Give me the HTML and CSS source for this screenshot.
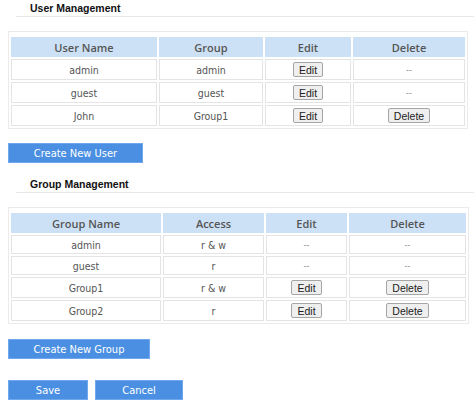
FILE: index.html
```html
<!DOCTYPE html>
<html>
<head>
<meta charset="utf-8">
<link rel="stylesheet" href="styles.css">
</head>
<body>
<div class="page">
  <div class="title">User Management</div>
  <div class="twrap">
    <table class="grid users">
      <colgroup><col class="u1"><col class="u2"><col class="u3"><col class="u4"></colgroup>
      <tr class="head"><th>User Name</th><th>Group</th><th>Edit</th><th>Delete</th></tr>
      <tr class="brow"><td>admin</td><td>admin</td><td><button class="sm">Edit</button></td><td class="dash">--</td></tr>
      <tr class="brow"><td>guest</td><td>guest</td><td><button class="sm">Edit</button></td><td class="dash">--</td></tr>
      <tr class="brow"><td>John</td><td>Group1</td><td><button class="sm">Edit</button></td><td><button class="sm">Delete</button></td></tr>
    </table>
  </div>
  <button class="blue create-user">Create New User</button>

  <div class="title t2">Group Management</div>
  <div class="twrap">
    <table class="grid groups">
      <colgroup><col class="g1"><col class="g2"><col class="g3"><col class="g4"></colgroup>
      <tr class="head"><th>Group Name</th><th>Access</th><th>Edit</th><th>Delete</th></tr>
      <tr class="trow"><td>admin</td><td>r &amp; w</td><td class="dash">--</td><td class="dash">--</td></tr>
      <tr class="trow"><td>guest</td><td>r</td><td class="dash">--</td><td class="dash">--</td></tr>
      <tr class="brow"><td>Group1</td><td>r &amp; w</td><td><button class="sm">Edit</button></td><td><button class="sm">Delete</button></td></tr>
      <tr class="brow"><td>Group2</td><td>r</td><td><button class="sm">Edit</button></td><td><button class="sm">Delete</button></td></tr>
    </table>
  </div>
  <button class="blue create-group">Create New Group</button>

  <div class="actions">
    <button class="blue save">Save</button>
    <button class="blue cancel">Cancel</button>
  </div>
</div>
</body>
</html>
```
FILE: styles.css
```css
html, body {
  margin: 0;
  padding: 0;
  background: #ffffff;
}

.page {
  padding: 0 0 0 8px;
  font-family: "DejaVu Sans Condensed", "DejaVu Sans", sans-serif;
}

.title {
  margin-left: 8px;
  padding: 2px 0 2px 14px;
  font-family: "Liberation Sans", Arial, sans-serif;
  font-weight: bold;
  font-size: 10.5px;
  line-height: 12px;
  color: #111;
  border-bottom: 1px solid #e4e6e8;
}

.t2 {
  margin-top: 13px;
}

.twrap {
  margin-top: 14px;
  display: inline-block;
  border: 1px solid #ebebeb;
  padding: 3px 0 0 0;
  vertical-align: top;
}

.grid {
  table-layout: fixed;
  border-collapse: separate;
  border-spacing: 2px;
}

.u1 { width: 146px; }
.u2 { width: 104px; }
.u3 { width: 86px; }
.u4 { width: 112px; }

.g1 { width: 150px; }
.g2 { width: 101px; }
.g3 { width: 81px; }
.g4 { width: 117px; }

.grid th,
.grid td {
  padding: 0;
  text-align: center;
  vertical-align: middle;
}

.grid th {
  background: #cde1f6;
  border: 1px solid #cde1f6;
  font-family: "Open Sans", "Noto Sans", sans-serif;
  font-weight: 600;
  font-size: 11px;
  color: #555;
}

.grid td {
  border: 1px solid #e4e4e4;
  font-size: 10.5px;
  color: #555;
}

.head { height: 20px; }
.brow { height: 21px; }
.trow { height: 19px; }

.grid td.dash {
  color: #888;
  font-size: 9px;
}

.sm {
  font-family: "Liberation Sans", Arial, sans-serif;
  font-size: 10.5px;
  color: #222;
  background: #efefef;
  border: 1px solid #a5a5a5;
  border-radius: 2px;
  padding: 0 5px;
  height: 15px;
  line-height: 12px;
  margin: 0;
  vertical-align: middle;
}

.blue {
  display: block;
  font-family: "DejaVu Sans Condensed", "DejaVu Sans", sans-serif;
  font-size: 11px;
  color: #ffffff;
  background: #4a8fe2;
  border: 1px solid #70a8ee;
  height: 20px;
  padding: 0;
  margin: 0;
}

.create-user {
  margin-top: 14px;
  width: 135px;
}

.create-group {
  margin-top: 15px;
  width: 142px;
}

.actions {
  display: flex;
  gap: 7px;
  margin-top: 21px;
}

.save { width: 80px; }
.cancel { width: 88px; }
```
